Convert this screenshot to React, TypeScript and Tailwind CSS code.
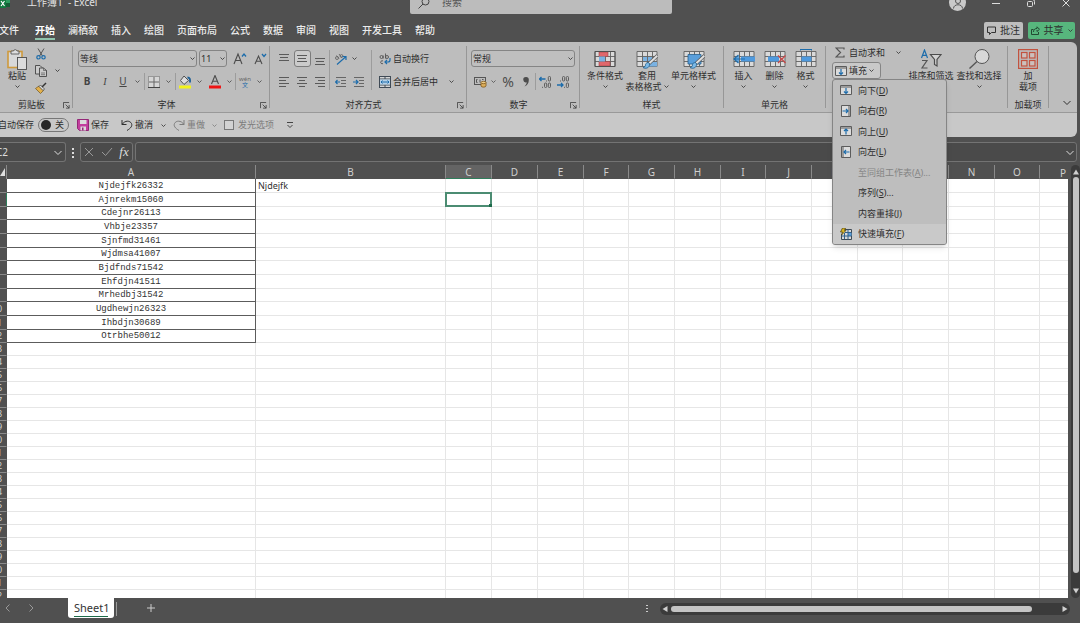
import { useState, type ReactNode } from 'react'

const tabs = ['文件', '开始', '澜栖叙', '插入', '绘图', '页面布局', '公式', '数据', '审阅', '视图', '开发工具', '帮助']

const names = [
  'Njdejfk26332',
  'Ajnrekm15060',
  'Cdejnr26113',
  'Vhbje23357',
  'Sjnfmd31461',
  'Wjdmsa41007',
  'Bjdfnds71542',
  'Ehfdjn41511',
  'Mrhedbj31542',
  'Ugdhewjn26323',
  'Ihbdjn30689',
  'Otrbhe50012',
]

const columns = [
  { name: 'A', width: 'w-[249px]' },
  { name: 'B', width: 'w-[190px]' },
  { name: 'C', width: 'w-[46px]' },
  { name: 'D', width: 'w-[46px]' },
  { name: 'E', width: 'w-[46px]' },
  { name: 'F', width: 'w-[45px]' },
  { name: 'G', width: 'w-[46px]' },
  { name: 'H', width: 'w-[46px]' },
  { name: 'I', width: 'w-[45px]' },
  { name: 'J', width: 'w-[46px]' },
  { name: 'K', width: 'w-[46px]' },
  { name: 'L', width: 'w-[45px]' },
  { name: 'M', width: 'w-[46px]' },
  { name: 'N', width: 'w-[46px]' },
  { name: 'O', width: 'w-[45px]' },
]

const rowCount = 32

type IconProps = { className?: string }

function Chevron({ className = 'w-[5px]' }: IconProps) {
  return (
    <svg viewBox="0 0 10 6" className={`shrink-0 ${className}`} fill="none" stroke="currentColor" strokeWidth="1.6">
      <path d="M1 1l4 4 4-4" />
    </svg>
  )
}

function WideChevron({ className = '' }: IconProps) {
  return (
    <svg viewBox="0 0 8 6" className={`h-1.5 w-2 shrink-0 ${className}`} fill="none" stroke="currentColor">
      <path d="M.5 1L4 4.500 7.500 1" />
    </svg>
  )
}

function Lines({ rows, boxed }: { rows: [number, number, number][]; boxed?: boolean }) {
  return (
    <span
      className={
        boxed
          ? 'flex h-[17px] w-[17px] items-center justify-center rounded-[3px] border border-[#7c7c7c] bg-[#cbcbcb]'
          : 'flex h-[17px] w-[17px] items-center justify-center'
      }
    >
      <svg viewBox="0 0 12 12" className="h-3 w-3 shrink-0" stroke="#5a5a5a" fill="none">
        {rows.map(([x1, x2, y]) => (
          <path key={y} d={`M${x1} ${y}H${x2}`} />
        ))}
      </svg>
    </span>
  )
}

function Indent({ right }: { right?: boolean }) {
  return (
    <svg viewBox="0 0 12 12" className="h-3 w-3" fill="none" stroke="#666">
      <path d="M1 1.500h10M6 4.500h5M6 7.500h5M1 10.500h10" />
      <path stroke="#1c6cab" strokeWidth="1.200" d={right ? 'M0 6h5M3 4l2 2-2 2' : 'M5 6H.5M2.500 4l-2 2 2 2'} />
    </svg>
  )
}

function PasteIcon() {
  return (
    <svg viewBox="0 0 20 22" className="h-[22px] w-5">
      <rect x="1" y="3.500" width="14" height="16" fill="#d8d8d8" stroke="#cf9a3c" strokeWidth="1.600" />
      <path d="M4 5V3h2.500a1.800 1.800 0 0 1 3.500 0h2v3H4z" fill="#dedede" stroke="#4c4c4c" strokeWidth=".8" />
      <rect x="10.500" y="9.500" width="9" height="12" fill="#dcdcdc" stroke="#4c4c4c" strokeWidth=".9" />
    </svg>
  )
}

function CutIcon() {
  return (
    <svg viewBox="0 0 10 12" className="h-3 w-2.5" fill="none">
      <path d="M2 .5l4.500 7.500M8 .5L3.500 8" stroke="#555" />
      <circle cx="2.500" cy="9.300" r="1.700" stroke="#1c6cab" strokeWidth="1.200" />
      <circle cx="7.500" cy="9.300" r="1.700" stroke="#1c6cab" strokeWidth="1.200" />
    </svg>
  )
}

function CopyIcon() {
  return (
    <svg viewBox="0 0 12 12" className="h-3 w-3" fill="#cacaca" stroke="#444" strokeWidth=".9">
      <path d="M5 9H.5V.5H5L7 2.500V3" />
      <path d="M4.500 3h4l3 2.500v6h-7z" />
      <path d="M8.500 3v2.500h3M6 8h4M6 9.700h4" fill="none" strokeWidth=".6" />
    </svg>
  )
}

function BrushIcon() {
  return (
    <svg viewBox="0 0 12 12" className="h-3 w-3">
      <path d="M.5 6.500l3.500-2.500 4.500 4.500-3 3z" fill="#e3b04b" stroke="#6f5520" strokeWidth=".7" />
      <path d="M4 4.500l1.500-1.500 4 4-1.500 1.500z" fill="#ddd" stroke="#333" strokeWidth=".7" />
      <path d="M7 5l4-4" stroke="#333" strokeWidth="1.500" />
    </svg>
  )
}

function BordersIcon() {
  return (
    <svg viewBox="0 0 12 12" className="h-3 w-3" fill="#d6d6d6" stroke="#666">
      <rect x=".5" y=".5" width="11" height="11" strokeDasharray="1 1" />
      <path d="M6 1v10M1 6h10" />
      <path d="M0 11.500h12" stroke="#444" />
    </svg>
  )
}

function FillColorIcon() {
  return (
    <svg viewBox="0 0 14 14" className="h-3.5 w-3.5">
      <path d="M6 1l4.500 4.500L6 9.500 2.500 5.500z" fill="#ddd" stroke="#444" strokeWidth=".9" />
      <path d="M9.500 2.500c2.300 0 2.800 1.500 2.500 5" fill="none" stroke="#1c5f96" strokeWidth="1.800" />
      <path d="M1 10.500h12v3H1z" fill="#f3f31a" />
    </svg>
  )
}

function FontColorIcon() {
  return (
    <svg viewBox="0 0 14 14" className="h-3.5 w-3.5">
      <path d="M3.500 9L7 .5 10.500 9M4.700 6.200h4.600" fill="none" stroke="#4c4c4c" strokeWidth="1.100" />
      <path d="M1 10.500h12v3H1z" fill="#ee1414" />
    </svg>
  )
}

function FontSizeIcon({ grow }: { grow?: boolean }) {
  return (
    <svg viewBox="0 0 14 14" className="h-3.5 w-3.5" fill="none">
      {grow ? (
        <>
          <path d="M1 12L5 2l4 10M2.500 8.500h5" stroke="#4c4c4c" strokeWidth="1.100" />
          <path d="M9 4.500L11 2l2 2.500" stroke="#1c6cab" strokeWidth="1.300" />
        </>
      ) : (
        <>
          <path d="M2 12l3.500-8L9 12M3.300 9.200h4.400" stroke="#4c4c4c" strokeWidth="1.100" />
          <path d="M9 2l2 2.500L13 2" stroke="#1c6cab" strokeWidth="1.300" />
        </>
      )}
    </svg>
  )
}

function OrientIcon() {
  return (
    <svg viewBox="0 0 14 12" className="h-3 w-3.5" fill="none">
      <g stroke="#666" strokeWidth=".9">
        <circle cx="3" cy="5" r="1.500" />
        <path d="M2.500 2.500l2.500 3M5 1l3 4" />
        <circle cx="7.500" cy="3" r="1.400" />
      </g>
      <path d="M3 11.500l9-8M8.500 3.500H12V7" stroke="#1c6cab" strokeWidth="1.200" />
    </svg>
  )
}

function WrapIcon() {
  return (
    <svg viewBox="0 0 12 12" className="h-3 w-3 shrink-0" fill="none" strokeWidth=".9">
      <g stroke="#555">
        <circle cx="2.500" cy="4" r="1.500" />
        <path d="M4.200 2.500v3M6.500.5v5" />
        <circle cx="8" cy="4" r="1.500" />
        <path d="M4 8a1.500 1.500 0 1 0 0 2.500" />
      </g>
      <path stroke="#1c6cab" strokeWidth="1.200" d="M11 5v2q0 2-2 2H6M8 7L6 9l2 2" />
    </svg>
  )
}

function MergeIcon() {
  return (
    <svg viewBox="0 0 12 12" className="h-3 w-3 shrink-0" fill="none">
      <rect x=".5" y=".5" width="11" height="11" fill="#d6d6d6" stroke="#3f4a55" />
      <path d="M1 3h10M1 9h10M6 1v2M6 9v2" stroke="#3f4a55" />
      <rect x="1" y="3.500" width="10" height="5" fill="#b5d1e8" />
      <path d="M2 6h8M3.500 4.500L2 6l1.500 1.500M8.500 4.500L10 6 8.500 7.500" stroke="#1c6cab" />
    </svg>
  )
}

function CurrencyIcon() {
  return (
    <svg viewBox="0 0 13 12" className="h-3 w-[13px]" fill="none">
      <rect x=".5" y="1.500" width="11" height="7" stroke="#555" />
      <path d="M3.500 3.500H2.500v3h1M6 3.500v3M8 3.500h1.500" stroke="#555" />
      <path d="M7 6.500v3.500c0 1.500 5 1.500 5 0V6.500" fill="#dcae5c" stroke="#7d5719" strokeWidth=".8" />
      <ellipse cx="9.500" cy="6.500" rx="2.500" ry="1.200" fill="#ebca86" stroke="#7d5719" strokeWidth=".8" />
    </svg>
  )
}

function DecimalIcon({ decrease }: { decrease?: boolean }) {
  return (
    <svg viewBox="0 0 12 12" className="h-3 w-3" fill="none" stroke="#555" strokeWidth=".9">
      {decrease ? (
        <>
          <rect x="5.500" y=".5" width="2.200" height="4.500" rx="1" />
          <rect x="9.300" y=".5" width="2.200" height="4.500" rx="1" />
          <rect x="9.300" y="7" width="2.200" height="4.500" rx="1" />
          <path d="M3 5h1M7 11.300h1" />
          <path d="M0 9h6M4 7l2 2-2 2" stroke="#1c6cab" strokeWidth="1.300" />
        </>
      ) : (
        <>
          <rect x="9.300" y=".5" width="2.200" height="4.500" rx="1" />
          <rect x="5.500" y="7" width="2.200" height="4.500" rx="1" />
          <rect x="9.300" y="7" width="2.200" height="4.500" rx="1" />
          <path d="M3 11.300h1M7 5h1" />
          <path d="M6.500 3h-6M2.500 1l-2 2 2 2" stroke="#1c6cab" strokeWidth="1.300" />
        </>
      )}
    </svg>
  )
}

// 22x20 table glyph shared by the big style and cell buttons
function TableIcon({ children }: { children?: ReactNode }) {
  return (
    <svg viewBox="0 0 22 20" className="h-5 w-[22px]" fill="none">
      <rect x="1" y="2.500" width="20" height="15" fill="#dadada" />
      <path d="M1 2.500h20v15H1zM1 7.500h20M1 12.500h20M6.500 2.500v15M11.500 2.500v15M16.500 2.500v15" stroke="#606060" strokeWidth=".9" />
      {children}
    </svg>
  )
}

function BrushOverlay() {
  return (
    <>
      <path d="M21.500 6.500l-8.500 8" stroke="#555" strokeWidth="3.400" />
      <path d="M21.300 6.700l-8 7.500" stroke="#e0e0e0" strokeWidth="2" />
      <path d="M13.500 14.500c-1-1.500-4-1-4 1.500 0 1.500-1 2-2.500 2.500 2 1.500 7 1 6.500-4z" fill="#7dbbe8" stroke="#24618f" strokeWidth=".8" />
    </>
  )
}

function ConditionalIcon() {
  return (
    <TableIcon>
      <path d="M5 3h9v4.500H5zM5 12.500h11V17H5z" fill="#e0676c" stroke="#a04347" strokeWidth=".6" />
      <path d="M5 7.500h6v5H5z" fill="#7ab2e2" />
      <path d="M1 2.500h20v15H1z" stroke="#505050" />
    </TableIcon>
  )
}

function FormatTableIcon() {
  return (
    <TableIcon>
      <path d="M7 8h4v4H7zM12 8h4v4h-4zM12 13h9v4.500h-9z" fill="#7ab2e2" />
      <BrushOverlay />
    </TableIcon>
  )
}

function CellStyleIcon() {
  return (
    <TableIcon>
      <path d="M5 5.500h13v9.500H5z" fill="#5a9fdb" stroke="#27618e" strokeWidth=".8" />
      <BrushOverlay />
    </TableIcon>
  )
}

function InsertIcon() {
  return (
    <TableIcon>
      <path d="M8 7.500h14v5H8z" fill="#4f9ade" />
      <path d="M6 6.500L1.500 10 6 13.500z" fill="#63a7e0" />
      <path d="M12 10H1.500M5.500 6L1 10l4.500 4" stroke="#1c6cab" strokeWidth="1.200" />
    </TableIcon>
  )
}

function DeleteIcon() {
  return (
    <TableIcon>
      <path d="M4 7.500h11v5H4z" fill="#4f9ade" />
      <path d="M14 6.500l7.500 7.500M21.500 6.500L14 14" stroke="#c74a4a" strokeWidth="1.400" />
    </TableIcon>
  )
}

function FormatIcon() {
  return (
    <TableIcon>
      <path d="M6.500 7.500h10v5h-10z" fill="#4f9ade" />
      <path d="M5.500.5h11M5.500 0v1.500M16.500 0v1.500" stroke="#1c6cab" />
    </TableIcon>
  )
}

function SortIcon() {
  return (
    <svg viewBox="0 0 22 20" className="h-5 w-[22px]" fill="none" strokeWidth="1.200">
      <path d="M1.500 9l3-8 3 8M2.600 6.300h3.800" stroke="#1c6cab" />
      <path d="M2 11.500h5L2 19h5.500" stroke="#555" />
      <path d="M10.500 5.500h10.500L17 10.500V17l-2.500-1.500v-5z" stroke="#4c4c4c" fill="#d2d2d2" />
    </svg>
  )
}

function FindIcon() {
  return (
    <svg viewBox="0 0 22 20" className="h-5 w-[22px]" fill="none" stroke="#555">
      <circle cx="14" cy="7.500" r="7" fill="#d8d8d8" />
      <path d="M9 12.500L1.500 19.500" strokeWidth="1.400" />
    </svg>
  )
}

function AddinIcon() {
  return (
    <svg viewBox="0 0 20 20" className="h-5 w-5" fill="none" stroke="#c2533f" strokeWidth="1.200">
      <rect x=".6" y=".6" width="18.800" height="18.800" />
      <g fill="#ccc0bd">
        <rect x="3.500" y="3.500" width="5.500" height="5.500" />
        <rect x="11.500" y="3.500" width="5.500" height="5.500" />
        <rect x="3.500" y="11.500" width="5.500" height="5.500" />
        <rect x="11.500" y="11.500" width="5.500" height="5.500" />
      </g>
    </svg>
  )
}

function FillIcon({ dir }: { dir: 'down' | 'right' | 'up' | 'left' }) {
  const arrows = {
    down: 'M6 4v5.500M4 7.500l2 2 2-2',
    up: 'M6 9.500V4M4 6l2-2 2 2',
    right: 'M2.500 6h5.500M6 4l2 2-2 2',
    left: 'M9.500 6H4M6 4L4 6l2 2',
  }
  const vertical = dir === 'down' || dir === 'up'
  return (
    <svg viewBox="0 0 12 12" className="h-3 w-3 shrink-0" fill="none">
      {vertical ? (
        <path d="M.5 1.500h11v9H.5zM.5 3h11" fill="#dcdcdc" stroke="#5c5c5c" />
      ) : (
        <path d={dir === 'right' ? 'M1.500.5h9v11h-9zM9 .5v11' : 'M1.500.5h9v11h-9zM3 .5v11'} fill="#dcdcdc" stroke="#5c5c5c" />
      )}
      <path d={arrows[dir]} stroke="#1c6cab" strokeWidth="1.200" />
    </svg>
  )
}

function FlashFillIcon() {
  return (
    <svg viewBox="0 0 12 12" className="h-3 w-3" fill="none">
      <path d="M3.500 1.500h8v10h-10V6" fill="#d9d9d9" stroke="#3f4a55" />
      <path d="M8 5h3.500v3H8z" fill="#5a9fdb" />
      <path d="M1.500 8h10M4.500 5v6M8 1.500v10M5 4.500h6.500" stroke="#33618a" />
      <path d="M2.500 0h3L4.500 2.500H6L1.500 7l1-3H.5z" fill="#d8b421" stroke="#554a1a" strokeWidth=".8" />
    </svg>
  )
}

function UndoIcon({ flip }: { flip?: boolean }) {
  return (
    <svg viewBox="0 0 12 12" className="h-3 w-3" fill="none" stroke="currentColor">
      <path d={flip ? 'M11 1v4.500H6.500M11 5.500C8 1 3 1.500 1.500 4.500 .5 7 2 9 6 11.500' : 'M1 1v4.500h4.500M1 5.500C4 1 9 1.500 10.500 4.500 11.500 7 10 9 6 11.500'} />
    </svg>
  )
}

function SaveIcon() {
  return (
    <svg viewBox="0 0 12 12" className="h-3 w-3">
      <path d="M.5.5h11v11h-9l-2-2z" fill="#c23f9e" stroke="#942777" />
      <path d="M3 1h6.500v4H3zM3.500 7.500h5.500v4H3.500z" fill="#dcdcdc" />
      <path d="M5 8.500h1.500v3H5z" fill="#942777" />
    </svg>
  )
}

function Group({ label, className, launcher, children }: { label: string; className: string; launcher?: boolean; children: ReactNode }) {
  return (
    <section className={`flex shrink-0 ${className}`}>
      <div className="flex min-w-0 flex-1 flex-col">
        <div className="flex h-14 items-start">{children}</div>
        <div className="flex h-3.5 items-center">
          <span className="flex-1 text-center leading-[14px] whitespace-nowrap">{label}</span>
          {launcher && (
            <button aria-label={`${label}设置`} className="mr-0.5">
              <svg viewBox="0 0 8 8" className="h-[7px] w-[7px]" fill="none" stroke="#444">
                <path d="M.5 7V.5H7M3 3l4 4M7 3.500V7H3.500" />
              </svg>
            </button>
          )}
        </div>
      </div>
      <div className="my-1 w-px bg-[#979797]" />
    </section>
  )
}

function Tool({ label, className = 'w-[18px]', children }: { label: string; className?: string; children: ReactNode }) {
  return (
    <button aria-label={label} className={`flex h-[17px] shrink-0 items-center justify-center ${className}`}>
      {children}
    </button>
  )
}

function Combo({ label, value, className }: { label: string; value: string; className: string }) {
  return (
    <label className={`relative flex h-[17px] shrink-0 ${className}`}>
      <select
        aria-label={label}
        defaultValue={value}
        className="w-full appearance-none rounded-[3px] border border-[#858585] bg-[#bfbfbf] pl-px leading-[15px]"
      >
        <option>{value}</option>
      </select>
      <Chevron className="pointer-events-none absolute top-[7px] right-0.5 w-[5px]" />
    </label>
  )
}

function BigButton({ icon, lines, className, chevron = true }: { icon: ReactNode; lines: string[]; className: string; chevron?: boolean }) {
  return (
    <button className={`flex shrink-0 flex-col items-center pt-1 leading-[10px] whitespace-nowrap ${className}`}>
      <span className="flex h-[25px] items-center">{icon}</span>
      <span>{lines[0]}</span>
      <span className="flex h-[11px] items-center gap-0.5">
        {lines[1]}
        {chevron && <Chevron />}
      </span>
    </button>
  )
}

function VLine({ className = 'h-[17px]' }: IconProps) {
  return <span className={`w-px shrink-0 bg-[#9c9c9c] ${className}`} />
}

function FillMenu() {
  const items: { text: string; key: string; more?: boolean; icon?: ReactNode; disabled?: boolean; active?: boolean }[] = [
    { text: '向下', key: 'D', icon: <FillIcon dir="down" /> },
    { text: '向右', key: 'R', icon: <FillIcon dir="right" /> },
    { text: '向上', key: 'U', icon: <FillIcon dir="up" /> },
    { text: '向左', key: 'L', icon: <FillIcon dir="left" /> },
    { text: '至同组工作表', key: 'A', more: true, disabled: true },
    { text: '序列', key: 'S', more: true },
    { text: '内容重排', key: 'J' },
    { text: '快速填充', key: 'F', icon: <FlashFillIcon />, active: true },
  ]
  return (
    <div
      role="menu"
      className="absolute top-full left-0 z-20 grid h-[166px] w-[115px] auto-rows-fr overflow-hidden rounded-[3px] border border-[#858585] bg-[#bebebe] shadow-md"
    >
      {items.map((item) => (
        <button
          key={item.key}
          role="menuitem"
          disabled={item.disabled}
          className={`flex items-center pl-[7px] text-left whitespace-nowrap disabled:text-[#858585] ${item.active ? 'bg-[#c9c9c9]' : ''}`}
        >
          <span className="w-[18px]">{item.icon}</span>
          <span>
            {item.text}(<u>{item.key}</u>){item.more && '...'}
          </span>
        </button>
      ))}
    </div>
  )
}

function TitleBar() {
  return (
    <header className="-mt-[9px] flex h-[23px] shrink-0 items-center text-[10px] text-[#e2e2e2]">
      <svg viewBox="0 0 12 16" className="h-4 w-3 shrink-0">
        <path d="M0 0h10v11H0z" fill="#2c9c5e" />
        <path d="M0 8h10v4H0z" fill="#155f37" />
        <path d="M0 3h6v10H0z" fill="#127a40" />
        <path d="M1 6l3.500 5M4.500 6L1 11" stroke="#fff" strokeWidth="1.200" />
      </svg>
      <span className="ml-[15px] w-[383px]">工作簿1&nbsp; - Excel</span>
      <label className="flex h-full w-[262px] items-center gap-3 rounded-b-[2px] bg-[#bcbcbc] pl-2 text-[#555]">
        <svg viewBox="0 0 12 12" className="h-3 w-3 shrink-0" fill="none" stroke="#444">
          <circle cx="7.500" cy="4.500" r="3.500" />
          <path d="M5 7L.5 11.500" />
        </svg>
        <input aria-label="搜索" placeholder="搜索" className="w-40 placeholder:text-[#555]" />
      </label>
      <div className="ml-auto flex items-center">
        <button aria-label="帐户" className="mr-[25px] flex h-[17px] w-[17px] items-center justify-center rounded-full bg-[#c9c9c9]">
          <svg viewBox="0 0 12 12" className="h-3 w-3" fill="none" stroke="#555">
            <circle cx="6" cy="4" r="2.500" />
            <path d="M1.500 11.500c0-5 9-5 9 0" />
          </svg>
        </button>
        <button aria-label="最小化" className="mr-[25px]">
          <svg viewBox="0 0 10 10" className="h-2.5 w-2.5" stroke="#ddd"><path d="M1 5.500h8" /></svg>
        </button>
        <button aria-label="还原" className="mr-[25px]">
          <svg viewBox="0 0 10 10" className="h-2.5 w-2.5" stroke="#ddd" fill="none">
            <rect x="1.500" y="3.500" width="5" height="5" rx="1" />
            <path d="M3.500 1.500h3q2 0 2 2v3" />
          </svg>
        </button>
        <button aria-label="关闭" className="mr-[9px]">
          <svg viewBox="0 0 10 10" className="h-2.5 w-2.5" stroke="#ddd"><path d="M1.500 1.500l7 7M8.500 1.500l-7 7" /></svg>
        </button>
      </div>
    </header>
  )
}

function RibbonTabs() {
  return (
    <nav className="flex h-7 shrink-0 items-center gap-[13px] pt-1.5 text-[10px] text-[#ececec]">
      {tabs.map((tab) => (
        <button
          key={tab}
          className={`h-[18px] shrink-0 border-b-2 leading-4 first:mr-[3px] first:-ml-px ${
            tab === '开始' ? 'border-[#8fc3ac] font-bold text-white' : 'border-transparent font-medium'
          }`}
        >
          {tab}
        </button>
      ))}
      <div className="mr-[5px] mb-0.5 ml-auto flex shrink-0 gap-[5px] text-[#2e2e2e]">
        <button className="flex h-[17px] w-[39px] items-center justify-center gap-1 rounded-[2px] bg-[#bebebe]">
          <svg viewBox="0 0 9 9" className="h-[9px] w-[9px] shrink-0" fill="none" stroke="#333">
            <path d="M.5 1h8v5.500h-4L2.500 8.500v-2h-2z" />
          </svg>
          批注
        </button>
        <button className="flex h-[17px] w-[47px] items-center justify-center gap-1 rounded-[2px] bg-[#57b67d]">
          <svg viewBox="0 0 9 9" className="h-[9px] w-[9px] shrink-0" fill="none" stroke="#234a33">
            <path d="M2.500 3.500h-2v5h7V6M2.500 6c0-3 2-3.500 3.500-3.500V.8L8.500 3.300 6 5.500V4" />
          </svg>
          共享
          <Chevron />
        </button>
      </div>
    </nav>
  )
}

function Ribbon() {
  const [menuOpen, setMenuOpen] = useState(true)

  return (
    <div className="flex h-[71px] shrink-0 rounded-tr-md border-b border-[#999] bg-[#bdbdbd]">
      <Group label="剪贴板" className="w-[73px]" launcher>
        <BigButton icon={<PasteIcon />} lines={['粘贴']} className="ml-[5px] w-6" />
        <div className="ml-1.5 flex flex-col pt-[3px]">
          <Tool label="剪切" className="w-3"><CutIcon /></Tool>
          <div className="flex">
            <Tool label="复制" className="w-3"><CopyIcon /></Tool>
            <Tool label="复制选项" className="ml-1 w-3"><Chevron /></Tool>
          </div>
          <Tool label="格式刷" className="w-3"><BrushIcon /></Tool>
        </div>
      </Group>

      <Group label="字体" className="w-[197px]" launcher>
        <div className="flex flex-col gap-1.5 pt-2 pl-[5px]">
          <div className="flex items-center gap-0.5">
            <Combo label="字体" value="等线" className="w-[119px]" />
            <Combo label="字号" value="11" className="w-7" />
            <Tool label="增大字号" className="ml-0.5 w-[18px]"><FontSizeIcon grow /></Tool>
            <Tool label="减小字号"><FontSizeIcon /></Tool>
          </div>
          <div className="flex items-center text-[10px] text-[#444]">
            <Tool label="加粗"><b>B</b></Tool>
            <Tool label="倾斜"><i className="font-['Liberation_Serif',serif]">I</i></Tool>
            <Tool label="下划线"><u>U</u></Tool>
            <Tool label="下划线选项" className="w-2.5"><Chevron /></Tool>
            <VLine className="ml-0.5 h-[17px]" />
            <Tool label="边框"><BordersIcon /></Tool>
            <Tool label="边框选项" className="w-2.5"><Chevron /></Tool>
            <VLine className="ml-0.5 h-[17px]" />
            <Tool label="填充颜色"><FillColorIcon /></Tool>
            <Tool label="填充颜色选项" className="w-2.5"><Chevron /></Tool>
            <Tool label="字体颜色" className="ml-0.5 w-[18px]"><FontColorIcon /></Tool>
            <Tool label="字体颜色选项" className="w-2.5"><Chevron /></Tool>
            <VLine className="ml-px h-[17px]" />
            <Tool label="拼音">
              <span className="flex flex-col items-center text-[6px] leading-[6px]">
                <span className="text-[#666]">wén</span>
                <span className="text-[#1c6cab]">文</span>
              </span>
            </Tool>
            <Tool label="拼音选项" className="w-2.5"><Chevron /></Tool>
          </div>
        </div>
      </Group>

      <Group label="对齐方式" className="w-[197px]" launcher>
        <div className="flex flex-col gap-1.5 pt-2 pl-[5px]">
          <div className="flex">
            <Tool label="顶端对齐"><Lines rows={[[1, 11, 1.5], [2, 10, 4.5], [1, 11, 7.5]]} /></Tool>
            <Tool label="垂直居中"><Lines boxed rows={[[1, 11, 2.5], [2, 10, 5.5], [1, 11, 8.5]]} /></Tool>
            <Tool label="底端对齐"><Lines rows={[[1, 11, 5.5], [2, 10, 8.5], [1, 11, 11.5]]} /></Tool>
          </div>
          <div className="flex">
            <Tool label="左对齐"><Lines rows={[[1, 11, 1.5], [1, 8, 4.5], [1, 11, 7.5], [1, 8, 10.5]]} /></Tool>
            <Tool label="居中"><Lines rows={[[1, 11, 1.5], [3, 9, 4.5], [1, 11, 7.5], [3, 9, 10.5]]} /></Tool>
            <Tool label="右对齐"><Lines rows={[[1, 11, 1.5], [4, 11, 4.5], [1, 11, 7.5], [4, 11, 10.5]]} /></Tool>
          </div>
        </div>
        <VLine className="mt-2 h-10" />
        <div className="flex flex-col gap-1.5 pt-2 pl-0.5">
          <div className="flex">
            <Tool label="方向"><OrientIcon /></Tool>
            <Tool label="方向选项" className="w-2"><Chevron /></Tool>
          </div>
          <div className="flex">
            <Tool label="减少缩进量"><Indent /></Tool>
            <Tool label="增加缩进量"><Indent right /></Tool>
          </div>
        </div>
        <VLine className="mt-2 ml-[3px] h-10" />
        <div className="flex flex-1 flex-col gap-1.5 pt-2 pl-[7px]">
          <button className="flex h-[17px] items-center gap-0.5 whitespace-nowrap"><WrapIcon />自动换行</button>
          <div className="flex">
            <button className="flex h-[17px] items-center gap-0.5 whitespace-nowrap"><MergeIcon />合并后居中</button>
            <Tool label="合并选项" className="ml-[7px] w-3"><Chevron /></Tool>
          </div>
        </div>
      </Group>

      <Group label="数字" className="w-[113px]" launcher>
        <div className="flex flex-col gap-1.5 pt-2 pl-1">
          <Combo label="数字格式" value="常规" className="w-[104px]" />
          <div className="flex items-center text-[#4d4d4d]">
            <Tool label="会计数字格式"><CurrencyIcon /></Tool>
            <Tool label="会计格式选项" className="w-2"><Chevron /></Tool>
            <Tool label="百分比样式" className="ml-0.5 w-[18px] text-sm">%</Tool>
            <Tool label="千位分隔样式">
              <svg viewBox="0 0 8 12" className="h-3 w-2" fill="#4d4d4d">
                <path d="M4 1a2.600 2.600 0 0 1 2.800 3c0 3-1.500 5.500-4.300 6.500C4 9 4.700 7.500 4.700 6.300A2.700 2.700 0 1 1 4 1z" />
              </svg>
            </Tool>
            <VLine />
            <Tool label="增加小数位数"><DecimalIcon /></Tool>
            <Tool label="减少小数位数"><DecimalIcon decrease /></Tool>
          </div>
        </div>
      </Group>

      <Group label="样式" className="w-36">
        <BigButton icon={<ConditionalIcon />} lines={['条件格式']} className="ml-1.5 w-[38px]" />
        <BigButton icon={<FormatTableIcon />} lines={['套用', '表格格式']} className="w-[46px]" />
        <BigButton icon={<CellStyleIcon />} lines={['单元格样式']} className="w-[47px]" />
      </Group>

      <Group label="单元格" className="w-[102px]">
        <BigButton icon={<InsertIcon />} lines={['插入']} className="ml-1 w-[31px]" />
        <BigButton icon={<DeleteIcon />} lines={['删除']} className="w-[31px]" />
        <BigButton icon={<FormatIcon />} lines={['格式']} className="w-[31px]" />
      </Group>

      <Group label="" className="w-[182px]">
        <div className="flex w-[78px] flex-col gap-px pt-0.5 pl-1.5">
          <div className="flex items-center">
            <button className="flex h-[17px] items-center gap-1 whitespace-nowrap">
              <svg viewBox="0 0 10 11" className="ml-[3px] h-[11px] w-2.5" fill="none" stroke="#555" strokeWidth="1.200">
                <path d="M9 2.500V1H1l4.500 4.500L1 10h8V8.500" />
              </svg>
              自动求和
            </button>
            <Tool label="求和选项" className="ml-[7px] w-3"><Chevron /></Tool>
          </div>
          <div className="relative w-[49px]">
            <button
              aria-expanded={menuOpen}
              onClick={() => setMenuOpen(!menuOpen)}
              className="flex h-[17px] w-full items-center gap-0.5 rounded-[3px] border border-[#858585] bg-[#c9c9c9] pl-0.5 whitespace-nowrap"
            >
              <FillIcon dir="down" />
              填充
              <Chevron />
            </button>
            {menuOpen && <FillMenu />}
          </div>
        </div>
        <BigButton icon={<SortIcon />} lines={['排序和筛选']} className="ml-1 w-[46px]" />
        <BigButton icon={<FindIcon />} lines={['查找和选择']} className="ml-0.5 w-[46px]" />
      </Group>

      <Group label="加载项" className="w-[41px]">
        <BigButton icon={<AddinIcon />} lines={['加', '载项']} chevron={false} className="w-10" />
      </Group>

      <button aria-label="折叠功能区" className="mr-1.5 mb-1.5 ml-auto self-end">
        <WideChevron />
      </button>
    </div>
  )
}

function QuickAccess() {
  return (
    <div className="flex h-6 shrink-0 items-center rounded-br-md bg-[#c8c8c8] whitespace-nowrap">
      <span className="-ml-0.5 w-10">自动保存</span>
      <button role="switch" aria-checked="false" aria-label="自动保存" className="flex h-3.5 w-[31px] items-center gap-1 rounded-full border border-[#777] pl-0.5">
        <span className="h-2.5 w-2.5 rounded-full bg-[#262626]" />
        关
      </button>
      <button className="ml-2 flex items-center gap-0.5"><SaveIcon />保存</button>
      <button className="ml-3 flex items-center gap-0.5"><UndoIcon />撤消</button>
      <Tool label="撤消选项" className="ml-1 w-3"><Chevron /></Tool>
      <button className="ml-1 flex items-center gap-0.5 text-[#7c7c7c]"><UndoIcon flip />重做</button>
      <Tool label="重做选项" className="ml-[3px] w-3 text-[#7c7c7c]"><Chevron /></Tool>
      <label className="ml-1 flex items-center gap-1 text-[#7c7c7c]">
        <input type="checkbox" className="h-2.5 w-2.5 appearance-none border border-[#777] bg-[#d2d2d2]" />
        发光选项
      </label>
      <button aria-label="自定义快速访问工具栏" className="ml-3">
        <svg viewBox="0 0 8 8" className="h-2 w-2" fill="none" stroke="#444">
          <path d="M1 1.500h6M1.500 4L4 6.500 6.500 4" />
        </svg>
      </button>
    </div>
  )
}

function FormulaBar() {
  return (
    <div className="flex h-7 shrink-0 items-start pt-[5px] pr-[3px] text-[10px] text-[#dcdcdc]">
      <label className="relative flex h-5 w-[66px] rounded-r-[3px] border border-l-0 border-[#737373] bg-[#4a4a4a]">
        <input aria-label="名称框" defaultValue="C2" className="-ml-1 w-12" />
        <WideChevron className="absolute top-[7px] right-[3px]" />
      </label>
      <svg viewBox="0 0 2 10" className="mx-1.5 mt-1.5 h-2.5 w-0.5" fill="#ddd">
        <path d="M0 0h2v2H0zM0 4h2v2H0zM0 8h2v2H0z" />
      </svg>
      <div className="flex h-5 w-[53px] items-center justify-around rounded-[3px] border border-[#737373] bg-[#4a4a4a]">
        <button aria-label="取消">
          <svg viewBox="0 0 10 10" className="h-2.5 w-2.5" stroke="#999"><path d="M1 1l8 8M9 1L1 9" /></svg>
        </button>
        <button aria-label="输入">
          <svg viewBox="0 0 12 10" className="h-2.5 w-3" stroke="#999" fill="none"><path d="M1 5l3.500 3.500L11 1" /></svg>
        </button>
        <button aria-label="插入函数" className="font-['Liberation_Serif',serif] text-[13px] leading-4 italic">fx</button>
      </div>
      <label className="relative ml-0.5 flex h-5 flex-1 rounded-[3px] border border-[#737373] bg-[#4a4a4a]">
        <input aria-label="编辑栏" className="w-full px-1" />
        <WideChevron className="absolute top-[7px] right-0.5" />
      </label>
    </div>
  )
}

function Sheet() {
  return (
    <div className="flex min-h-0 flex-1">
      <div className="min-w-0 flex-1 overflow-hidden bg-white">
        <table className="w-full table-fixed border-separate border-spacing-0">
          <colgroup>
            <col className="w-[7px]" />
            {columns.map((c) => (
              <col key={c.name} className={c.width} />
            ))}
            <col />
          </colgroup>
          <thead className="bg-[#505050] text-[10px] text-[#cfcfcf]">
            <tr className="h-3.5">
              <th aria-label="全选" className="border-r border-[#8a8a8a] p-0">
                <svg viewBox="0 0 6 10" className="h-2.5 w-1.5" fill="#e0e0e0"><path d="M5 1v8H0z" /></svg>
              </th>
              {columns.map((c) => (
                <th
                  key={c.name}
                  className={`border-r border-b border-r-[#8a8a8a] p-0 pt-px leading-3 font-normal ${
                    c.name === 'C' ? 'border-b-[#2f7d5b] bg-[#646464]' : 'border-b-[#505050]'
                  }`}
                >
                  {c.name}
                </th>
              ))}
              <th className="p-0 pt-px leading-3 font-normal">
                <div className="w-[46px] text-center">P</div>
              </th>
            </tr>
          </thead>
          <tbody>
            {Array.from({ length: rowCount }, (_, i) => {
              const filled = i < names.length
              return (
                <tr key={i} className={filled && i % 3 !== 2 ? 'h-3.5' : 'h-[13px]'}>
                  <th className={`border-r border-b border-b-[#8a8a8a] bg-[#505050] p-0 text-[9px] leading-3 font-normal text-[#cfcfcf] ${i === 1 ? 'border-r-[#2f7d5b]' : 'border-r-[#505050]'}`}>
                    <div className="-ml-[13px] w-5 text-center">{i + 1}</div>
                  </th>
                  <td
                    className={`border-r border-b p-0 text-center font-['Liberation_Mono',monospace] text-[9px] leading-3 text-[#333] ${
                      filled ? 'border-[#5c5c5c]' : 'border-[#e6e6e6]'
                    }`}
                  >
                    {names[i]}
                  </td>
                  {columns.slice(1).map((c) => (
                    <td key={c.name} className="relative border-r border-b border-[#e6e6e6] p-0 text-[9px] leading-3 text-[#333]">
                      {i === 0 && c.name === 'B' && <span className="pl-0.5">Njdejfk</span>}
                      {i === 1 && c.name === 'C' && (
                        <div className="absolute -inset-px border-2 border-[#4b8c72]">
                          <span className="absolute -right-0.5 -bottom-0.5 h-[3px] w-[3px] bg-[#1d6b4a]" />
                        </div>
                      )}
                    </td>
                  ))}
                  <td className="border-b border-[#e6e6e6] p-0" />
                </tr>
              )
            })}
          </tbody>
        </table>
      </div>
      <div className="flex w-3 shrink-0 pl-[3px]">
        <div className="flex w-full flex-col items-center rounded-md bg-[#3b3b3b] py-1">
          <svg viewBox="0 0 6 6" className="h-1.5 w-1.5" fill="#d0d0d0"><path d="M3 .5L6 5.500H0z" /></svg>
          <div className="mt-0.5 mb-[15px] w-1.5 flex-1 rounded-full bg-[#c4c4c4]" />
          <svg viewBox="0 0 6 6" className="h-1.5 w-1.5" fill="#d0d0d0"><path d="M0 .5h6L3 5.500z" /></svg>
        </div>
      </div>
    </div>
  )
}

function SheetTabs() {
  return (
    <footer className="flex h-[25px] shrink-0 items-start pr-2.5 text-[#cfcfcf]">
      <button aria-label="上一个工作表" className="mt-1.5 ml-1">
        <svg viewBox="0 0 8 8" className="h-2 w-2" fill="none" stroke="#999"><path d="M5.500.5L2 4l3.500 3.500" /></svg>
      </button>
      <button aria-label="下一个工作表" className="mt-1.5 ml-[15px]">
        <svg viewBox="0 0 8 8" className="h-2 w-2" fill="none" stroke="#999"><path d="M2.500.5L6 4 2.500 7.500" /></svg>
      </button>
      <button className="ml-[33px] h-5 w-[46px] rounded-b-[3px] bg-white px-1.5 text-[11px] text-[#333]">
        <span className="block border-b border-[#1d6b4a] leading-4">Sheet1</span>
      </button>
      <VLine className="mt-1 ml-0.5 h-3.5" />
      <button aria-label="新工作表" className="mt-1.5 ml-[30px]">
        <svg viewBox="0 0 8 8" className="h-2 w-2" stroke="#ccc"><path d="M4 0v8M0 4h8" /></svg>
      </button>
      <svg viewBox="0 0 2 10" className="mt-1.5 mr-3 ml-auto h-2.5 w-0.5" fill="#ccc">
        <path d="M0 1h2v1H0zM0 4h2v1H0zM0 7h2v1H0z" />
      </svg>
      <div className="mt-[5px] flex h-3 w-[410px] items-center rounded-full bg-[#3b3b3b] px-0.5">
        <svg viewBox="0 0 6 6" className="h-1.5 w-1.5" fill="#d0d0d0"><path d="M5.500 0v6L.5 3z" /></svg>
        <div className="mr-[30px] ml-[3px] h-1.5 flex-1 rounded-full bg-[#c4c4c4]" />
        <svg viewBox="0 0 6 6" className="h-1.5 w-1.5" fill="#d0d0d0"><path d="M.5 0v6l5-3z" /></svg>
      </div>
    </footer>
  )
}

export default function App() {
  return (
    <div
      lang="zh-CN"
      className="flex h-screen flex-col overflow-hidden bg-[#505050] font-['Noto_Sans','Noto_Sans_CJK_SC',sans-serif] text-[9px] text-[#2e2e2e]"
    >
      <TitleBar />
      <RibbonTabs />
      <div className="mr-[3px] flex shrink-0 flex-col">
        <Ribbon />
        <QuickAccess />
      </div>
      <FormulaBar />
      <Sheet />
      <SheetTabs />
    </div>
  )
}
